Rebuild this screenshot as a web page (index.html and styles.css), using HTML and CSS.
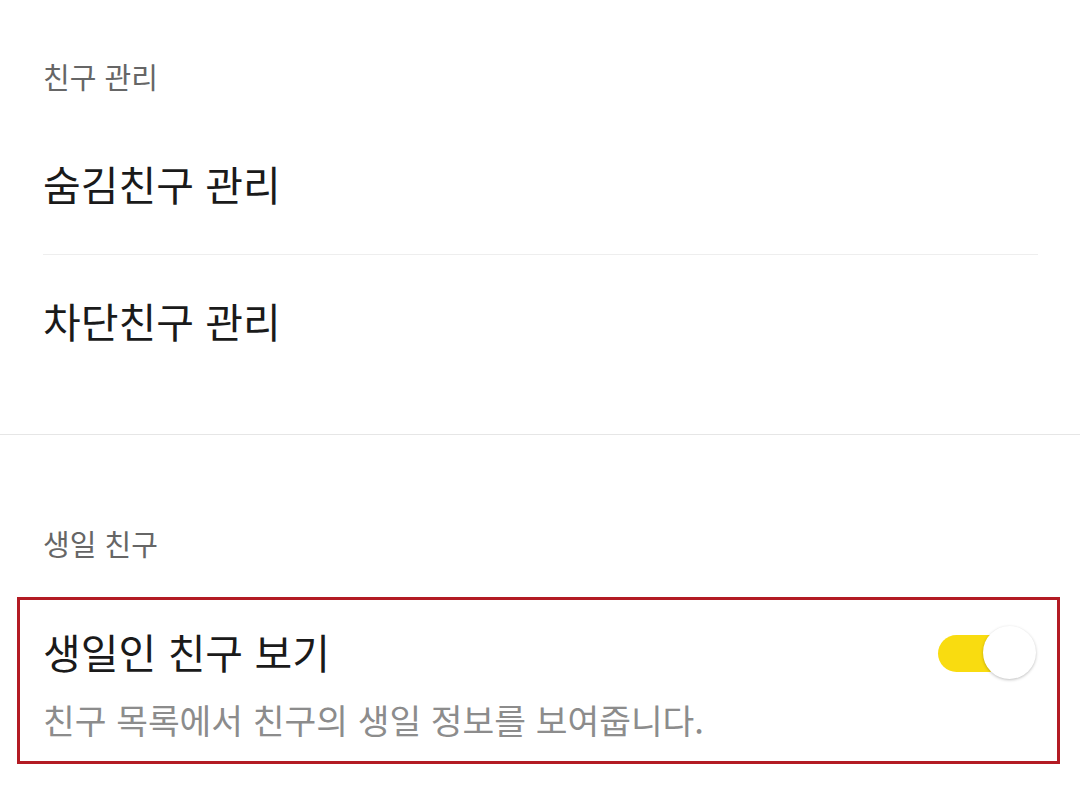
FILE: index.html
```html
<!DOCTYPE html>
<html lang="ko">
<head>
    <meta charset="UTF-8">
    <meta name="viewport" content="width=device-width, initial-scale=1.0">
    <title>친구 설정</title>
    <link rel="stylesheet" href="styles.css">
</head>
<body>
    <div class="section">
        <div class="section-title">친구 관리</div>
        <div class="item">숨김친구 관리</div>
        <div class="item">차단친구 관리</div>
    </div>

    <!-- Birthday -->
    <div class="section section-birthday">
        <div class="section-title">생일 친구</div>
        <div class="toggle-item highlight">
            <div class="toggle-row">
                <div class="toggle-title">생일인 친구 보기</div>
                <span class="switch on"><span class="track"></span><span class="knob"></span></span>
            </div>
            <div class="toggle-desc">친구 목록에서 친구의 생일 정보를 보여줍니다.</div>
        </div>
    </div>
</body>
</html>
```

FILE: styles.css
```css
body {
    font-family: "Noto Sans CJK KR", "Noto Sans", sans-serif;
    margin: 0;
    padding: 0;
    background: #fff;
    color: #1a1a1a;
}
.section {
    padding: 56px 0 43px;
    border-bottom: 1px solid #e6e6e6;
}
.section-birthday {
    padding-top: 88px;
    border-bottom: none;
}
.section-title {
    font-size: 29px;
    line-height: 40px;
    color: #666;
    padding: 0 43px;
}
.section > .section-title + .item {
    margin-top: 22px;
}
.item {
    font-size: 41px;
    line-height: 56px;
    padding: 37px 0 43px;
    margin: 0 42px 0 43px;
}
.item + .item {
    border-top: 1px solid #eeeeee;
}
.toggle-item {
    margin: 34px 20px 0 17px;
    padding: 24px 21px 20px 23px;
}
.highlight {
    border: 3px solid #b31b23;
}
.toggle-row {
    display: flex;
    justify-content: space-between;
    align-items: center;
    height: 54px;
}
.toggle-title {
    font-size: 41px;
    line-height: 54px;
}
.toggle-desc {
    font-size: 34.5px;
    line-height: 44px;
    color: #8c8c8c;
    margin-top: 19px;
}
.switch {
    position: relative;
    width: 98px;
    height: 54px;
    margin-top: 4px;
}
.switch .track {
    position: absolute;
    left: 0;
    top: 9px;
    width: 70px;
    height: 37px;
    border-radius: 19px;
    background: #f9dc10;
}
.switch .knob {
    position: absolute;
    right: 0;
    top: 0;
    width: 53px;
    height: 53px;
    border-radius: 50%;
    background: #fff;
    box-shadow: 0 1px 3px rgba(0, 0, 0, 0.25);
}
```
